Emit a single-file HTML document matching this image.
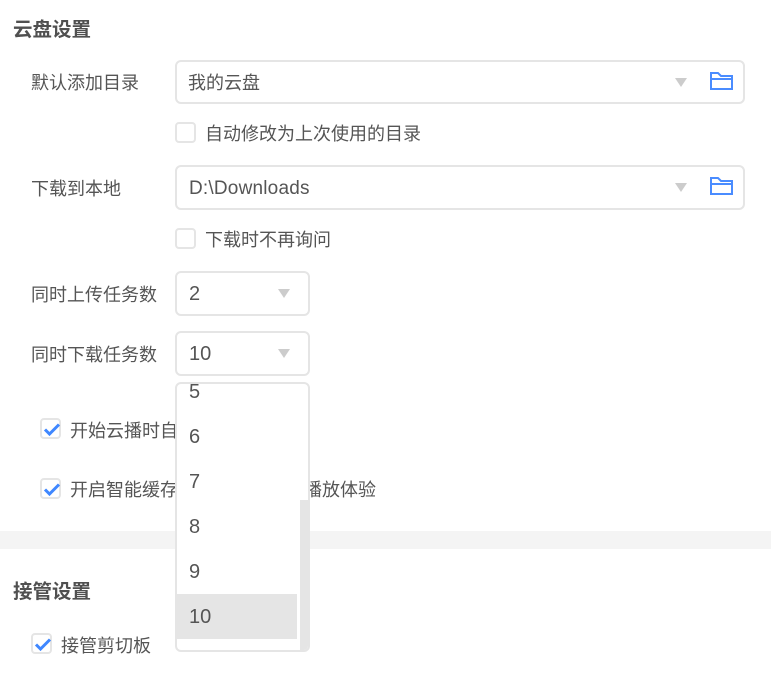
<!DOCTYPE html>
<html><head><meta charset="utf-8"><style>
html,body{margin:0;padding:0;background:#fff}
body{width:771px;height:676px;position:relative;overflow:hidden;font-family:"Liberation Sans","Noto Sans CJK SC",sans-serif;color:#555;font-size:18px}
.t{position:absolute;white-space:nowrap;line-height:24px}
.h{font-weight:700;font-size:19.5px;color:#505050}
.s{position:absolute;box-sizing:border-box;border:2px solid #e5e5e5;border-radius:6px;background:#fff}
.c{position:absolute;box-sizing:border-box;width:21px;height:21px;border:2px solid #e5e5e5;border-radius:4px;background:#fff}
.c svg{position:absolute;left:2px;top:3px;overflow:visible}
.a{position:absolute;width:0;height:0;border-left:6px solid transparent;border-right:6px solid transparent;border-top:9px solid #ccc}
.f{position:absolute}
.o{position:absolute;left:189px;line-height:24px;font-size:20px}
</style></head><body>
<div class="t h" style="left:13px;top:18px">云盘设置</div>
<div class="t" style="left:31px;top:71px">默认添加目录</div>
<div class="s" style="left:175px;top:60px;width:570px;height:44px"></div>
<div class="t" style="left:188px;top:71px">我的云盘</div>
<div class="a" style="left:675px;top:78px"></div>
<svg class="f" style="left:710px;top:72px" width="23" height="18" viewBox="0 0 23 18" fill="none" stroke="#4a8cff" stroke-width="2"><path d="M1 17V1H8L11 4H22V17ZM1 7H22"/></svg>
<div class="c" style="left:175px;top:122px"></div>
<div class="t" style="left:205px;top:122px">自动修改为上次使用的目录</div>

<div class="t" style="left:31px;top:177px">下载到本地</div>
<div class="s" style="left:175px;top:165px;width:570px;height:45px"></div>
<div class="t" style="left:189px;top:177px;font-size:19px;letter-spacing:.2px">D:\Downloads</div>
<div class="a" style="left:675px;top:183px"></div>
<svg class="f" style="left:710px;top:177px" width="23" height="18" viewBox="0 0 23 18" fill="none" stroke="#4a8cff" stroke-width="2"><path d="M1 17V1H8L11 4H22V17ZM1 7H22"/></svg>
<div class="c" style="left:175px;top:228px"></div>
<div class="t" style="left:205px;top:228px">下载时不再询问</div>

<div class="t" style="left:31px;top:283px">同时上传任务数</div>
<div class="s" style="left:175px;top:271px;width:135px;height:45px"></div>
<div class="t" style="left:189px;top:282px;font-size:20px">2</div>
<div class="a" style="left:278px;top:289px"></div>

<div class="t" style="left:31px;top:343px">同时下载任务数</div>
<div class="s" style="left:175px;top:331px;width:135px;height:45px"></div>
<div class="t" style="left:189px;top:342px;font-size:20px">10</div>
<div class="a" style="left:278px;top:349px"></div>

<div class="c" style="left:40px;top:418px"><svg width="16" height="13" viewBox="0 0 16 13" fill="none" stroke="#3f87ff" stroke-width="3"><path d="M1 6.500L5.500 11L15 1.500"/></svg></div>
<div class="t" style="left:70px;top:419px">开始云播时自动关闭下载任务</div>
<div class="c" style="left:40px;top:478px"><svg width="16" height="13" viewBox="0 0 16 13" fill="none" stroke="#3f87ff" stroke-width="3"><path d="M1 6.500L5.500 11L15 1.500"/></svg></div>
<div class="t" style="left:70px;top:478px">开启智能缓存，以获得更好的播放体验</div>

<div style="position:absolute;left:0;top:531px;width:771px;height:18px;background:#f4f4f4"></div>
<div class="t h" style="left:13px;top:580px">接管设置</div>
<div class="c" style="left:31px;top:633px"><svg width="16" height="13" viewBox="0 0 16 13" fill="none" stroke="#3f87ff" stroke-width="3"><path d="M1 6.500L5.500 11L15 1.500"/></svg></div>
<div class="t" style="left:61px;top:634px">接管剪切板</div>

<div style="position:absolute;left:175px;top:382px;width:135px;height:270px;box-sizing:border-box;border:2px solid #e5e5e5;border-radius:6px;background:#fff;overflow:hidden">
<div style="position:absolute;left:0;top:210px;width:120px;height:45px;background:#e5e5e5"></div>
<div style="position:absolute;right:0;top:116px;width:8px;height:152px;background:#e5e5e5"></div>
</div>
<div style="position:absolute;left:177px;top:384px;width:120px;height:20px;overflow:hidden"><div style="position:absolute;left:12px;top:-4px;line-height:24px;font-size:20px">5</div></div>
<div class="o" style="top:425px">6</div>
<div class="o" style="top:470px">7</div>
<div class="o" style="top:515px">8</div>
<div class="o" style="top:560px">9</div>
<div class="o" style="top:605px">10</div>
</body></html>
